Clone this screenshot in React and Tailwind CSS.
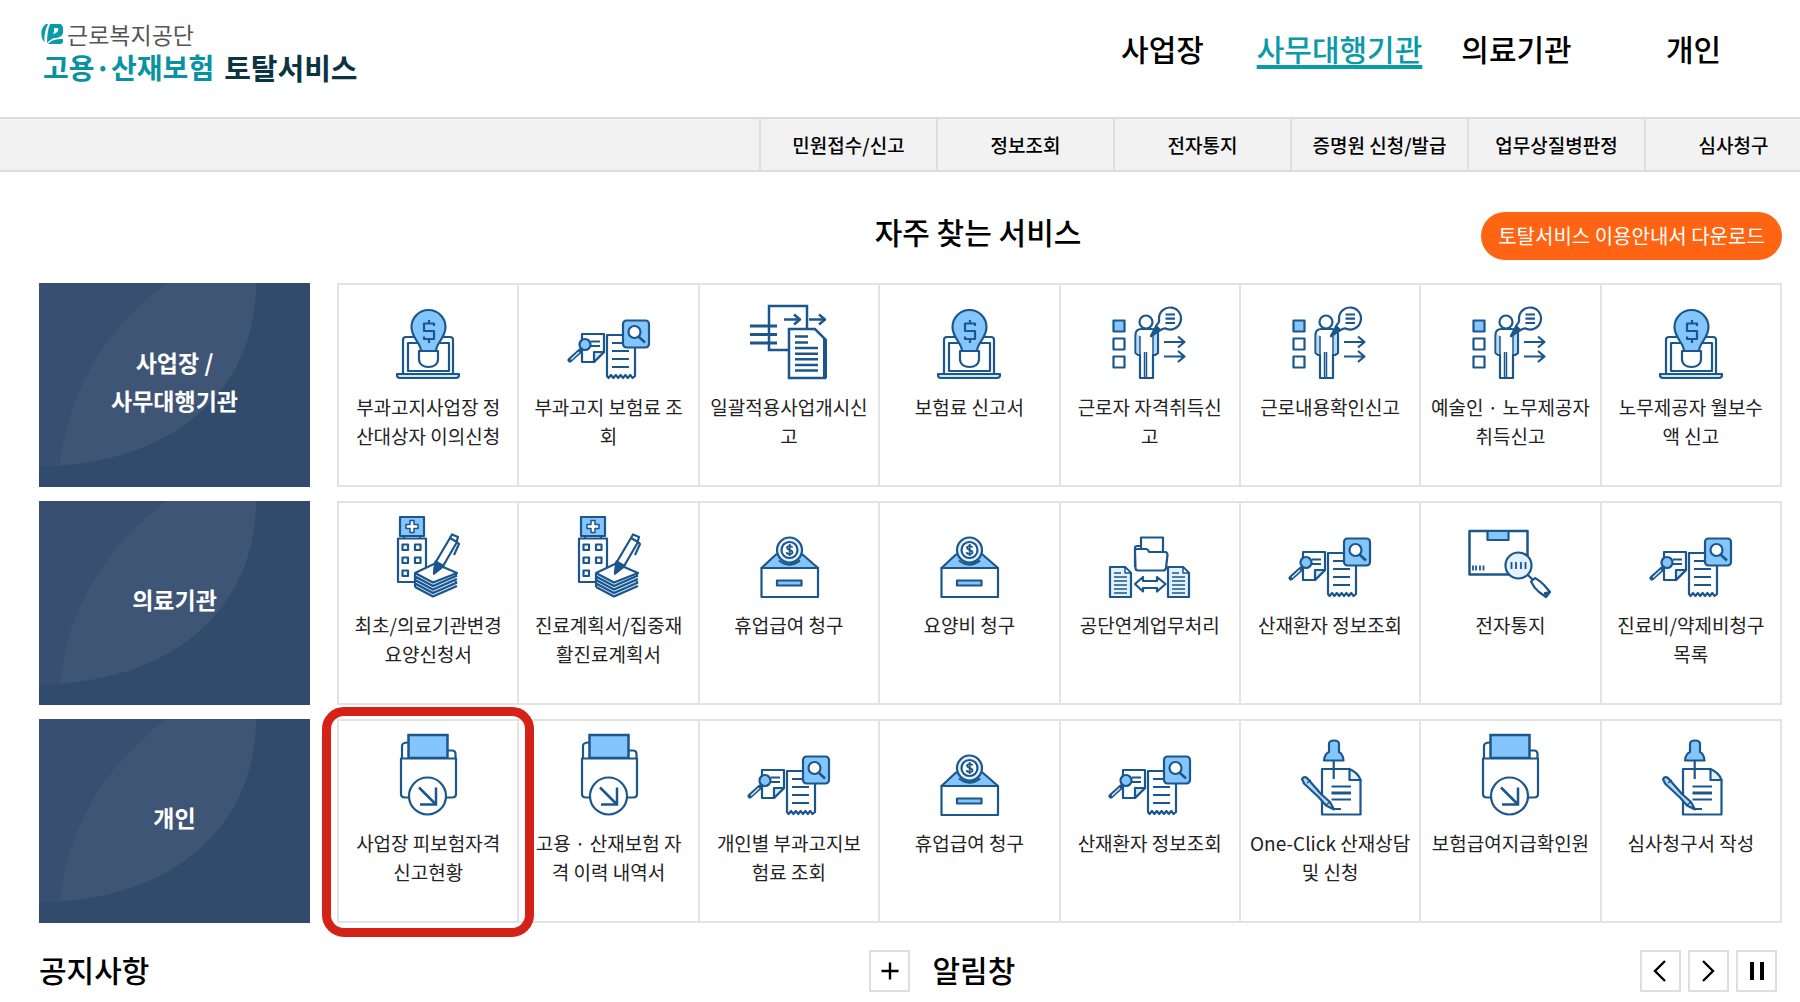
import { clsx } from 'clsx'

const INK = '#1b568c'
const SKY = '#84c5fb'

function Icon({ children }) {
  return (
    <svg viewBox="0 0 84 84" className="w-[84px] h-[84px] flex-shrink-0" fill="none" stroke={INK} strokeWidth="2.2" strokeLinejoin="round" aria-hidden="true">
      {children}
    </svg>
  )
}

const LaptopBulb = () => (
  <Icon>
    <path d="M17 77V43q0-3 3-3h44q3 0 3 3v34" fill="#fff" />
    <rect x="22" y="46" width="41" height="28" />
    <path d="M11 77h62v1q0 3-3 3H14q-3 0-3-3z" fill="#cfe6fb" />
    <path d="M33 54v8c0 5 4 8 9.5 8s9.5-3 9.5-8v-8z" fill="#fff" />
    <path d="M35 54c0-8-9.5-13-9.5-24a17 17 0 0 1 34 0c0 11-9.5 16-9.5 24z" fill={SKY} />
    <path d="M48 29v-2.5H38V34h10v8H38v-2.5M43 23v3.5M43 42v4" />
  </Icon>
)

const ReceiptSearch = () => (
  <Icon>
    <path d="M15 37h22v18l-10 10H15z" fill="#fff" />
    <path d="M27 65V55h10z" fill="#cfe6fb" />
    <path d="M24 44.5h9M24 49h9" />
    <path d="M13 54L3 63" strokeWidth="5" strokeLinecap="round" />
    <path d="M12 55L4 62.5" stroke="#cfe6fb" strokeWidth="1.5" />
    <circle cx="18" cy="47.5" r="5.5" fill={SKY} />
    <path d="M40 38h28v41l-2.4 2-2.4-3-2.4 3-2.4-3-2.4 3-2.4-3-2.4 3-2.4-3-2.4 3-2.4-3-2.4 3-1.6-2z" fill="#fff" />
    <path d="M45 46h10M45 54h17M45 62h17M45 70h17" />
    <rect x="56" y="23.5" width="26" height="27" rx="3.5" fill={SKY} />
    <path d="M71.5 39.5l6.5 6" strokeWidth="2.5" />
    <circle cx="67.5" cy="35" r="6" fill="#fff" />
  </Icon>
)

const Transfer = () => (
  <Icon>
    <path d="M41 53H22V9h38v23" strokeWidth="2.5" strokeLinejoin="miter" />
    <path d="M3 29h27M3 37.5h27M3 46h27" strokeWidth="3.2" />
    <path d="M37 22.5h14M62 22.5h14" strokeWidth="2.5" />
    <path d="M47 17.5l6 5-6 5M72 17.5l6 5-6 5" strokeWidth="2.5" />
    <path d="M42 32h26l10 10v39H42z" fill="#fff" strokeWidth="2.5" strokeLinejoin="miter" />
    <path d="M78 42v39" strokeWidth="4" />
    <path d="M48 39.5h13M48 45.5h13M48 51h23M48 56.7h23M48 62.3h23M48 68h23M48 73.5h23" strokeWidth="2.6" />
  </Icon>
)

const PersonFlow = () => (
  <Icon>
    <rect x="5.5" y="23.5" width="11" height="11" fill={SKY} />
    <rect x="5.5" y="41.5" width="11" height="11" />
    <rect x="5.5" y="59.5" width="11" height="11" />
    <path d="M27.5 56V38q0-6 6-6h10q6.5 0 6.5 6v18l-3 2h-2V81H32V58h-2z" fill="#fff" />
    <path d="M28.5 38v18h3V38zM45.5 38v18h3.5V38z" fill="#b5d8f8" stroke="none" />
    <path d="M32 39v20M45 39v20M38.5 55v26M36.5 55v26" strokeWidth="1.5" />
    <circle cx="38" cy="25" r="6.5" fill="#fff" />
    <path d="M43 39l6-11.5C52 25 51 22 51 21.5a11 11 0 1 1 6 9.800c-2.5.3-3.5 1-5 2z" fill="#fff" />
    <path d="M43 39l6-9 3 3z" fill={INK} />
    <path d="M57.5 17.5h9.5M57.5 21.7h9.5M57.5 26h9.5" />
    <path d="M56 45h20M70 39.5l6.5 5.5-6.5 5.5M56 59.5h20M70 54l6.5 5.5-6.5 5.5" />
  </Icon>
)

const HospitalPapers = () => (
  <Icon>
    <rect x="14" y="2" width="24" height="19" fill={SKY} />
    <path d="M24 5.5h4v4h4v4h-4v4h-4v-4h-4v-4h4z" fill="#fff" strokeWidth="1.5" />
    <path d="M18 21v2.5M34 21v2.5" />
    <path d="M12 23.5h28V67H12z" fill="#fff" />
    <path d="M16.5 29.5h5.5V35h-5.5zM29 29.5h5.5V35H29zM16.5 42.5h5.5V48h-5.5zM29 42.5h5.5V48H29zM16.5 55.5h5.5V61h-5.5z" />
    <path d="M29 58v14l18 10 23-10V58z" fill="#cfe6fb" stroke="none" />
    <path d="M29 72l18 9.5L71 71M29 68.5l18 9.5 24-10.5M29 65l18 9.5L71 64M29 61.5L47 71l24-10.5M29 58v14M70 58v4M70 66v3" />
    <path d="M29 58l20-9.5L71 58 47 67.5z" fill="#fff" />
    <path d="M48 58.5l1.5-11L64 23l7 4-14.5 25z" fill="#fff" />
    <path d="M48 58.5l1.5-12 8 4.5z" fill={INK} />
    <path d="M64 23l2-3.5 6 2.5-1.5 5M71 27l2 2-5 11" />
  </Icon>
)

const CoinBox = () => (
  <Icon>
    <path d="M14.5 53L29 39.5h26.5L71 53z" fill={SKY} />
    <path d="M14.5 53H71v29H14.5z" fill="#fff" />
    <path d="M30 65.5h24.5v5H30z" fill={SKY} />
    <circle cx="42.5" cy="35" r="12.5" fill="#e3f1fd" />
    <circle cx="42.5" cy="35" r="8" fill="#fff" />
    <path d="M45.5 32.5c-.5-2-5.5-2-5.5.3 0 2.5 5.5 1.8 5.5 4.5 0 2.4-5.5 2.4-6 0M42.7 29v12" strokeWidth="1.8" />
    <path d="M32 45.5q10 8 21 0" />
  </Icon>
)

const SmallDoc = ({ x }) => (
  <g>
    <path d={`M${x} 52h15l6 6v24H${x}z`} fill="#e3f1fd" />
    <path d={`M${x + 15} 52v6h6z`} fill="#fff" strokeWidth="1.5" />
    <path d={`M${x + 4} 58h7M${x + 4} 62h13M${x + 4} 66h13M${x + 4} 70h13M${x + 4} 74h13M${x + 4} 78h13`} strokeWidth="1.6" />
  </g>
)

const FolderExchange = () => (
  <Icon>
    <path d="M27 52V33q0-2 2-2h4" />
    <path d="M33 40V22.5h22V40" fill="#fff" />
    <path d="M27 36q0-2 2-2h9q2 0 3 3h16q2.5 0 2.5 3L58 53q-.5 2.5-3 2.5H30q-2.5 0-2.5-2.5z" fill="#fff" />
    <path d="M27 69l8-7v4h14v-4l8.500 7-8.500 7.500V73H35v3.500z" fill="#fff" />
    <SmallDoc x={2} />
    <SmallDoc x={60} />
  </Icon>
)

const ParcelSearch = () => (
  <Icon>
    <path d="M1.5 16h58v43.5h-58z" fill="#fff" strokeWidth="2.5" />
    <path d="M19.5 16h21v9h-21z" fill={SKY} />
    <path d="M5 50.5v5M8 50.5v5M12 50.5v5M15.5 50.5v5" strokeWidth="1.8" />
    <circle cx="50.5" cy="50.5" r="13" fill="#e3f1fd" />
    <path d="M43.5 47v7M48 47v7M53 47v7M57.5 47v7" strokeWidth="1.8" />
    <path d="M60 60l5 5" />
    <path d="M63 66.5l4-3.5q4 2 9 7l6 7-4 5-7-5q-5-4-8-10.5zM78 82l-1-4 5-1" fill="#fff" />
  </Icon>
)

const FolderDown = () => (
  <Icon>
    <path d="M16 25V13q0-3.5 6-3.5M62 17.5h4q3.5 0 3.5 3.5v4" />
    <path d="M22.5 2h39v23h-39z" fill={SKY} strokeLinejoin="miter" strokeWidth="2.5" />
    <path d="M15 25.5h55V61q0 3.5-4 3.5H19q-4 0-4-3.5z" fill="#fff" />
    <circle cx="41.5" cy="63" r="18.5" fill="#fff" />
    <path d="M33 54.5L49.5 71M34 71.5h16v-17" strokeWidth="2.5" strokeLinejoin="miter" />
  </Icon>
)

const PinDoc = () => (
  <Icon>
    <path d="M34 36h27l11.5 11v34.500H34z" fill="#fff" />
    <path d="M61.5 36v11h11q-2-7-11-11z" fill="#e3f1fd" />
    <path d="M45.7 27v19" />
    <path d="M41 11q0-3.5 5-3.5t5 3.5v8q4 2 4.5 8.5H36Q36.500 21 41 19z" fill={SKY} />
    <path d="M43.5 53.5H63M43.5 66.5H63M46 76h7" />
    <path d="M43.5 60H63" strokeWidth="3" />
    <path d="M14 46q2-3 5-1l14 16 9 8 4 7.5-8-4-7-8-15-14z" fill="#b5d8f8" />
    <path d="M19 50l4-3M38 72l4-3" strokeWidth="1.5" />
  </Icon>
)

const TOP_MENU = ['사업장', '사무대행기관', '의료기관', '개인']
const SUB_MENU = ['민원접수/신고', '정보조회', '전자통지', '증명원 신청/발급', '업무상질병판정', '심사청구']

const SERVICES = [
  {
    title: '사업장 /\n사무대행기관',
    items: [
      { icon: LaptopBulb, label: '부과고지사업장 정\n산대상자 이의신청' },
      { icon: ReceiptSearch, label: '부과고지 보험료 조\n회' },
      { icon: Transfer, label: '일괄적용사업개시신\n고' },
      { icon: LaptopBulb, label: '보험료 신고서' },
      { icon: PersonFlow, label: '근로자 자격취득신\n고' },
      { icon: PersonFlow, label: '근로내용확인신고' },
      { icon: PersonFlow, label: '예술인 · 노무제공자\n취득신고' },
      { icon: LaptopBulb, label: '노무제공자 월보수\n액 신고' },
    ],
  },
  {
    title: '의료기관',
    items: [
      { icon: HospitalPapers, label: '최초/의료기관변경\n요양신청서' },
      { icon: HospitalPapers, label: '진료계획서/집중재\n활진료계획서' },
      { icon: CoinBox, label: '휴업급여 청구' },
      { icon: CoinBox, label: '요양비 청구' },
      { icon: FolderExchange, label: '공단연계업무처리' },
      { icon: ReceiptSearch, label: '산재환자 정보조회' },
      { icon: ParcelSearch, label: '전자통지' },
      { icon: ReceiptSearch, label: '진료비/약제비청구\n목록' },
    ],
  },
  {
    title: '개인',
    items: [
      { icon: FolderDown, label: '사업장 피보험자격\n신고현황', marked: true },
      { icon: FolderDown, label: '고용 · 산재보험 자\n격 이력 내역서' },
      { icon: ReceiptSearch, label: '개인별 부과고지보\n험료 조회' },
      { icon: CoinBox, label: '휴업급여 청구' },
      { icon: ReceiptSearch, label: '산재환자 정보조회' },
      { icon: PinDoc, label: 'One-Click 산재상담\n및 신청' },
      { icon: FolderDown, label: '보험급여지급확인원' },
      { icon: PinDoc, label: '심사청구서 작성' },
    ],
  },
]

function Logo() {
  return (
    <a href="#home" className="flex flex-col">
      <span className="flex items-center gap-1 text-[23px] leading-7 text-[#555]">
        <svg viewBox="0 0 22 22" className="w-[22px] h-[22px]" aria-hidden="true">
          <path d="M5 1C1 4 0 8 .5 12c0 3 1 5 3 7C3 13 4 7 7 1z" fill="#0a9aa8" />
          <path d="M9 1h9c3 0 4 2 4 5v3c0 4-4 6-9 6-3 1-5 3-7 5C6 13 7 6 9 1z" fill="#0a9aa8" />
          <path d="M7 21c3-4 8-5 15-5v2c0 2-1 3-3 3z" fill="#0a9aa8" />
          <path d="M13 5h3q2 0 1 2.500T12 11q2-3 1-6z" fill="#fff" />
        </svg>
        근로복지공단
      </span>
      <span className="flex items-center gap-2.5 pl-0.5 text-[28px] leading-[38px] font-bold text-[#0893a2]">
        고용·산재보험 <span className="text-[29px] text-[#0b3443]">토탈서비스</span>
      </span>
    </a>
  )
}

function ServiceCard({ icon: Glyph, label, marked }) {
  return (
    <li className="relative border-r-2 border-[#e3e3e3]">
      <a href="#service" className="flex flex-col items-center h-full pt-3 text-center">
        <Glyph />
        <span className="mt-[11px] text-[19px] leading-[29px] text-[#222] whitespace-pre">{label}</span>
      </a>
      {marked && (
        <div className="absolute z-10 -left-[17px] -right-[17px] -top-3.5 -bottom-4 rounded-[22px] border-[9px] border-[#d42316] pointer-events-none" />
      )}
    </li>
  )
}

function ServiceRow({ title, items }) {
  return (
    <section className="flex gap-[27px]">
      <div className="relative w-[271px] h-[204px] flex-shrink-0 bg-[#314b6c] overflow-hidden">
        <svg viewBox="0 0 271 204" preserveAspectRatio="none" className="absolute inset-0 w-full h-full" aria-hidden="true">
          <path d="M0 0H217C217 110 130 183 0 183z" fill="#3f5576" />
          <path d="M0 0H128C60 50 28 115 21 183H0z" fill="#384f71" />
        </svg>
        <h3 className="relative flex items-center justify-center h-full pb-2 text-[23px] leading-[38px] font-bold text-white text-center whitespace-pre">{title}</h3>
      </div>
      <ul className="grid grid-cols-8 flex-1 border-y-2 border-l-2 border-[#e3e3e3]">
        {items.map((item, i) => <ServiceCard key={i} {...item} />)}
      </ul>
    </section>
  )
}

function SquareButton({ label, d, thick }) {
  return (
    <button aria-label={label} className="flex items-center justify-center w-[41px] h-[42px] bg-white border-2 border-[#dedede]">
      <svg viewBox="0 0 24 24" className="w-6 h-6" fill="none" stroke="#000" strokeWidth={thick ? 4 : 2.4} aria-hidden="true">
        <path d={d} />
      </svg>
    </button>
  )
}

export default function App() {
  return (
    <div className="min-h-screen overflow-hidden bg-white text-black font-['Noto_Sans_CJK_KR',sans-serif]">
      <header className="flex justify-between h-[117px] pl-[41px] pr-[18px]">
        <div className="pt-5"><Logo /></div>
        <nav className="flex pt-[26px]">
          {TOP_MENU.map(m => (
            <a key={m} href="#menu" className="w-[177px] text-center text-[30px] leading-[44px] font-medium">
              <span className={clsx(m === '사무대행기관' && 'text-[#0a9aa8] underline decoration-4 underline-offset-4')}>{m}</span>
            </a>
          ))}
        </nav>
      </header>

      <nav className="flex justify-end h-[55px] border-y-2 border-[#dcdcdc] bg-[#f2f2f2]">
        {/* last tab runs past the right edge */}
        <div className="flex -mr-[21px]">
          {SUB_MENU.map(m => (
            <a key={m} href="#sub" className="flex items-center justify-center w-[177px] pt-0.5 border-l-2 border-[#dedede] text-[19px] font-medium">{m}</a>
          ))}
        </div>
      </nav>

      <main className="pl-[39px] pr-[18px]">
        <div className="grid grid-cols-[1fr_auto_1fr] items-start pt-10 pl-[135px]">
          <h2 className="col-start-2 text-[30px] leading-[38px] font-medium">자주 찾는 서비스</h2>
          <button className="justify-self-end w-[301px] h-12 rounded-full bg-[#ff6412] text-white text-[20px]">토탈서비스 이용안내서 다운로드</button>
        </div>

        <div className="flex flex-col gap-3.5 mt-[23px]">
          {SERVICES.map(s => <ServiceRow key={s.title} {...s} />)}
        </div>

        <div className="grid grid-cols-[872fr_845fr] gap-[22px] mt-[27px] pr-[5px]">
          <section className="flex items-start justify-between">
            <h2 className="text-[30px] leading-[38px] font-medium">공지사항</h2>
            <SquareButton label="더보기" d="M3.500 12h17M12 3.500v17" />
          </section>
          <section className="flex items-start justify-between">
            <h2 className="text-[30px] leading-[38px] font-medium">알림창</h2>
            <div className="flex gap-[7px]">
              <SquareButton label="이전" d="M16 2L6 12l10 10" />
              <SquareButton label="다음" d="M6 2l10 10L6 22" />
              <SquareButton label="정지" d="M7 3v18M17 3v18" thick />
            </div>
          </section>
        </div>
      </main>
    </div>
  )
}
